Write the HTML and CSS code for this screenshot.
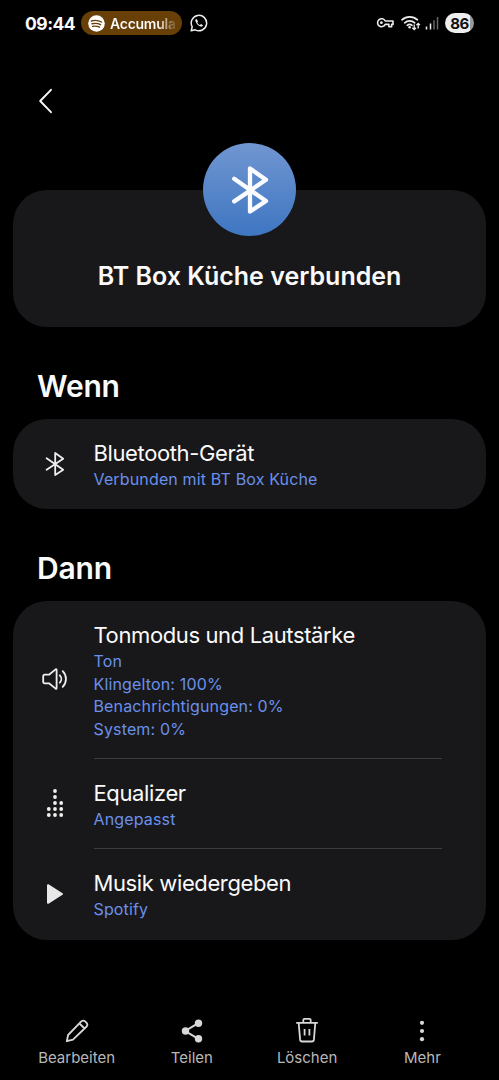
FILE: index.html
```html
<!DOCTYPE html>
<html lang="de">
<head>
    <meta charset="UTF-8">
    <meta name="viewport" content="width=device-width, initial-scale=1.0">
    <title>BT Box Küche verbunden</title>
    <link rel="stylesheet" href="styles.css">
</head>
<body>
    <div class="screen">
        <header class="status">
            <span class="time">09:44</span>
            <div class="chip">
                <svg width="17" height="17" viewBox="0 0 17 17">
                    <circle cx="8.5" cy="8.5" r="8.3" fill="#fff"/>
                    <path d="M3.4 6c3.4-1 7.1-.7 10.2 1M4 8.8c3-.8 6-.5 8.6.9M4.6 11.4c2.5-.6 4.8-.3 6.9.8" fill="none" stroke="#693f08" stroke-width="1.4" stroke-linecap="round"/>
                </svg>
                <span class="song">Accumula</span>
            </div>
            <svg class="whatsapp" width="18" height="18" viewBox="0 0 18 18">
                <path d="M1.2 16.8l1-4a7.7 7.7 0 1 1 3 3z" fill="none" stroke="#eee" stroke-width="1.5" stroke-linejoin="round"/>
                <path d="M6.4 4.8c-.9.4-1.3 1.3-1 2.3.8 2.7 2.6 4.6 5.3 5.5 1 .3 2-.2 2.3-1.3l-2-1.2-1.1 1c-1.2-.5-2.1-1.5-2.7-2.7l.9-1z" fill="#eee"/>
            </svg>
            <div class="signals">
                <svg width="18" height="12" viewBox="0 0 18 12">
                    <path d="M9.2 4H17v3.4h-1.4v2.4h-2.7V7.4H9.2a4 4 0 1 1 0-3.4z" fill="none" stroke="#eee" stroke-width="1.6" stroke-linejoin="round"/>
                    <circle cx="5.4" cy="5.7" r="1.4" fill="#eee"/>
                </svg>
                <svg class="wifi" width="20" height="16" viewBox="0 0 20 16">
                    <g fill="none" stroke="#eee" stroke-width="1.7" stroke-linecap="round">
                        <path d="M1 4.8a11.5 11.5 0 0 1 15.4 0M3.7 7.8a7.5 7.5 0 0 1 10 0M6.3 10.3a3.8 3.8 0 0 1 4.7 0"/>
                    </g>
                    <circle cx="8.6" cy="12.2" r="1.3" fill="#eee"/>
                    <path d="M13.2 9.5v5M11.4 12.8l1.8 1.8 1.8-1.8M17.2 13.5v-5M15.4 10.1l1.8-1.8 1.8 1.8" fill="none" stroke="#eee" stroke-width="1.3"/>
                </svg>
                <svg class="bars" width="14" height="14" viewBox="0 0 14 14">
                    <path d="M1.5 10.5V13.5M5.5 7.5V13.5" stroke="#eee" stroke-width="1.5"/>
                    <path d="M9 4.2V13.5M12.5 1V13.5" stroke="#666" stroke-width="1.5"/>
                </svg>
                <span class="battery">86</span>
            </div>
        </header>

        <nav class="back">
            <svg width="15" height="26" viewBox="0 0 15 26">
                <path d="M13 1.8L2.2 13L13 24.2" fill="none" stroke="#fafafa" stroke-width="1.9" stroke-linecap="round" stroke-linejoin="round"/>
            </svg>
        </nav>

        <section class="hero">
            <div class="badge">
                <svg width="40" height="50" viewBox="0 0 40 50">
                    <path d="M4.2 13.8L36 36L20 46.5V3.5L36 14.8L4.2 36.4" fill="none" stroke="#fafcff" stroke-width="4.3" stroke-linecap="round" stroke-linejoin="round"/>
                </svg>
            </div>
            <h1>BT Box Küche verbunden</h1>
        </section>

        <h2>Wenn</h2>
        <section class="card">
            <div class="row">
                <div class="icon">
                    <svg width="20" height="26" viewBox="0 0 20 26">
                        <path d="M1.6 7.2L18.2 18.8L10.2 24V2L18.2 7.8L1.6 18.8" fill="none" stroke="#eee" stroke-width="1.8" stroke-linecap="round" stroke-linejoin="round"/>
                    </svg>
                </div>
                <div class="text">
                    <h3>Bluetooth-Gerät</h3>
                    <p>Verbunden mit BT Box Küche</p>
                </div>
            </div>
        </section>

        <h2>Dann</h2>
        <section class="card">
            <div class="row">
                <div class="icon">
                    <svg width="26" height="22" viewBox="0 0 26 22">
                        <g fill="none" stroke="#eee" stroke-width="1.8" stroke-linecap="round" stroke-linejoin="round">
                            <path d="M1.2 8.2q0-1.5 1.5-1.5H7L13.6 1.4q1-.5 1 .6V20q0 1.1-1 .6L7 15.3H2.7q-1.5 0-1.5-1.5z"/>
                            <path d="M17.8 7.3a5.3 5.3 0 0 1 0 7.4M20.7 3.2a11 11 0 0 1 0 15.6"/>
                        </g>
                    </svg>
                </div>
                <div class="text">
                    <h3>Tonmodus und Lautstärke</h3>
                    <p>Ton</p>
                    <p>Klingelton: 100%</p>
                    <p>Benachrichtigungen: 0%</p>
                    <p>System: 0%</p>
                </div>
            </div>
            <div class="row">
                <div class="icon">
                    <svg width="18" height="30" viewBox="0 0 18 30" fill="#f0f0f0">
                        <circle cx="9" cy="3" r="1.9"/>
                        <circle cx="9" cy="9" r="1.9"/>
                        <circle cx="9" cy="15" r="1.9"/>
                        <circle cx="15.2" cy="15" r="1.9"/>
                        <circle cx="2.8" cy="21" r="1.9"/>
                        <circle cx="9" cy="21" r="1.9"/>
                        <circle cx="15.2" cy="21" r="1.9"/>
                        <circle cx="2.8" cy="27" r="1.9"/>
                        <circle cx="9" cy="27" r="1.9"/>
                        <circle cx="15.2" cy="27" r="1.9"/>
                    </svg>
                </div>
                <div class="text">
                    <h3>Equalizer</h3>
                    <p>Angepasst</p>
                </div>
            </div>
            <div class="row">
                <div class="icon">
                    <svg width="18" height="22" viewBox="0 0 18 22">
                        <path d="M2 2.2L16 11L2 19.8z" fill="#e8e8e8" stroke="#e8e8e8" stroke-width="2" stroke-linejoin="round"/>
                    </svg>
                </div>
                <div class="text">
                    <h3>Musik wiedergeben</h3>
                    <p>Spotify</p>
                </div>
            </div>
        </section>

        <footer class="actions">
            <div class="action">
                <svg width="24" height="24" viewBox="0 0 24 24">
                    <path d="M1.8 22.2l1.3-6.2L16.3 2.4q1.9-1.6 3.8 0l1.5 1.5q1.5 1.8 0 3.6L8 20.7zM14.5 4.5l5 5" fill="none" stroke="#d8d8d8" stroke-width="1.8" stroke-linejoin="round"/>
                </svg>
                <span>Bearbeiten</span>
            </div>
            <div class="action">
                <svg width="24" height="24" viewBox="0 0 24 24">
                    <path d="M18.3 4.2L5.2 12L18.3 19.8" fill="none" stroke="#d8d8d8" stroke-width="2"/>
                    <circle cx="18.5" cy="4.3" r="3.7" fill="#d8d8d8"/>
                    <circle cx="5.5" cy="12" r="3.7" fill="#d8d8d8"/>
                    <circle cx="18.5" cy="19.7" r="3.7" fill="#d8d8d8"/>
                </svg>
                <span>Teilen</span>
            </div>
            <div class="action">
                <svg width="24" height="26" viewBox="0 0 24 26">
                    <path d="M1.2 5.8H22.8M8.3 5.5V3q0-1.2 1.2-1.2h5q1.2 0 1.2 1.2v2.5M3.7 6l1.4 16.7q.2 1.8 2 1.8h9.8q1.8 0 2-1.8L20.3 6M9.6 12v6.5M14.4 12v6.5" fill="none" stroke="#d8d8d8" stroke-width="1.8"/>
                </svg>
                <span>Löschen</span>
            </div>
            <div class="action">
                <svg width="24" height="24" viewBox="0 0 24 24" fill="#d8d8d8">
                    <circle cx="12" cy="3.8" r="2.1"/>
                    <circle cx="12" cy="12" r="2.1"/>
                    <circle cx="12" cy="20.2" r="2.1"/>
                </svg>
                <span>Mehr</span>
            </div>
        </footer>
    </div>
</body>
</html>
```
FILE: styles.css
```css
body {
    margin: 0;
    background-color: #000;
    color: #fafafa;
    font-family: Inter, Roboto, sans-serif;
}

h1, h2, h3, p {
    margin: 0;
}

svg {
    display: block;
    flex-shrink: 0;
}

.screen {
    display: flex;
    flex-direction: column;
    width: 499px;
    height: 1080px;
    box-sizing: border-box;
    padding: 0 13px;
    overflow: hidden;
}

/* status bar */
.status {
    display: flex;
    align-items: center;
    height: 46px;
    padding-left: 12px;
}

.time {
    width: 56px;
    font-size: 17.5px;
    font-weight: 700;
    letter-spacing: -0.5px;
    white-space: nowrap;
}

.chip {
    display: flex;
    align-items: center;
    gap: 5px;
    width: 101px;
    height: 24px;
    box-sizing: border-box;
    padding: 0 6px 0 7px;
    border-radius: 12px;
    background-color: #693f08;
}

.song {
    font-size: 14px;
    font-weight: 600;
    letter-spacing: -0.25px;
    white-space: nowrap;
    background: linear-gradient(to right, #fff 72%, rgba(255, 255, 255, 0.1) 100%);
    background-clip: text;
    -webkit-background-clip: text;
    color: transparent;
}

.whatsapp {
    margin-left: 8px;
}

.signals {
    display: flex;
    align-items: center;
    margin-left: auto;
    margin-right: 12px;
}

.wifi {
    margin-left: 7px;
}

.bars {
    margin-left: 4px;
}

.battery {
    width: 29px;
    height: 20px;
    margin-left: 6px;
    border-radius: 10px;
    background: linear-gradient(to right, #eee 86%, #999 86%);
    color: #111;
    font-size: 15px;
    font-weight: 700;
    letter-spacing: -0.6px;
    line-height: 21px;
    text-align: center;
}

.back {
    height: 55px;
    padding: 42px 0 0 25px;
}

/* header card with the round badge on its edge */
.hero {
    display: flex;
    flex-direction: column;
    align-items: center;
    height: 137px;
    margin-top: 47px;
    border-radius: 34px;
    background-color: #18181a;
}

.badge {
    display: flex;
    align-items: center;
    justify-content: center;
    width: 93px;
    height: 93px;
    margin-top: -47px;
    border-radius: 50%;
    background: linear-gradient(#7196d1, #3e76c2);
}

h1 {
    margin-top: 24px;
    font-size: 25px;
    font-weight: 600;
    line-height: 32px;
    white-space: nowrap;
}

h2 {
    height: 92px;
    padding: 40px 0 0 24px;
    box-sizing: border-box;
    font-size: 30px;
    font-weight: 600;
    letter-spacing: -0.2px;
    line-height: 38px;
}

.card {
    border-radius: 34px;
    background-color: #18181a;
}

.row {
    display: flex;
    align-items: center;
    padding-right: 44px;
}

.icon {
    display: flex;
    justify-content: center;
    width: 80.5px;
    padding-left: 2.5px;
    box-sizing: border-box;
}

.text {
    flex: 1;
    padding: 20px 0 18.5px;
}

.row:not(:last-child) .text {
    padding-bottom: 17.5px;
}

.row + .row .text {
    border-top: 1px solid #3c3c3e;
}

.row + .row:last-child .text {
    padding-top: 20.5px;
    padding-bottom: 19px;
}

h3 {
    font-size: 22px;
    font-weight: 400;
    letter-spacing: -0.38px;
    line-height: 29px;
    white-space: nowrap;
}

p {
    color: #6a90ea;
    font-size: 16px;
    letter-spacing: 0.15px;
    line-height: 22.5px;
    white-space: nowrap;
}

/* bottom actions */
.actions {
    display: flex;
    margin: auto 6px 12.5px;
}

.action {
    display: flex;
    flex: 1;
    flex-direction: column;
    align-items: center;
    justify-content: flex-end;
    gap: 5px;
    color: #b8b8b8;
    font-size: 15px;
    line-height: 20px;
}
```
